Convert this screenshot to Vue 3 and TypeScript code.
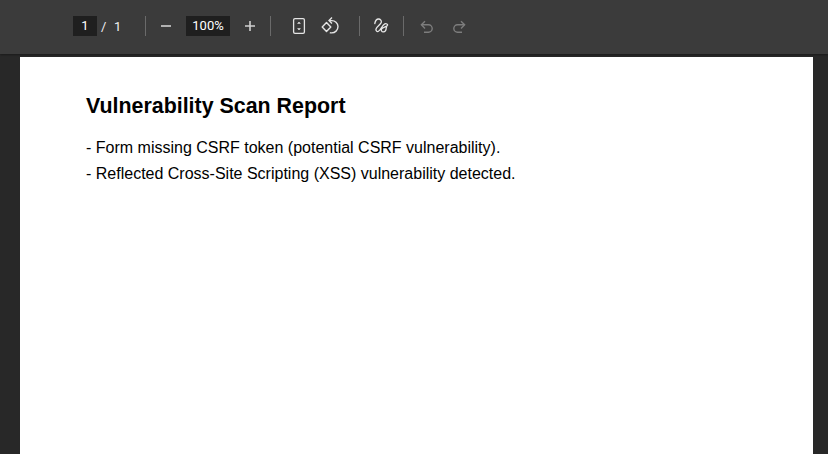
<script setup lang="ts">
const title = 'Vulnerability Scan Report'
const findings: string[] = [
  '- Form missing CSRF token (potential CSRF vulnerability).',
  '- Reflected Cross-Site Scripting (XSS) vulnerability detected.',
]
</script>

<template>
  <div class="viewer">
    <header class="toolbar">
      <span class="field page-field">1</span>
      <span class="slash">/</span>
      <span class="total">1</span>
      <i class="sep sep-a"></i>
      <button class="btn minus">
        <svg width="20" height="20" viewBox="0 0 20 20"><path d="M5 10h10" stroke="#d0d0d0" stroke-width="1.6" fill="none"/></svg>
      </button>
      <span class="field zoom-field">100%</span>
      <button class="btn plus">
        <svg width="20" height="20" viewBox="0 0 20 20"><path d="M5 10h10M10 5v10" stroke="#d0d0d0" stroke-width="1.6" fill="none"/></svg>
      </button>
      <i class="sep sep-b"></i>
      <button class="btn fit">
        <svg width="20" height="20" viewBox="0 0 20 20" fill="none"><rect x="4.6" y="2.600" width="10.800" height="14.800" rx="1.400" stroke="#e4e4e4" stroke-width="1.300"/><path d="M8.600 7.400 10 6l1.400 1.400zM8.600 12.600 10 14l1.400-1.400z" fill="#e4e4e4" stroke="#e4e4e4" stroke-width=".6"/></svg>
      </button>
      <button class="btn rotate">
        <svg width="20" height="20" viewBox="0 0 20 20" fill="none" stroke="#e4e4e4" stroke-width="1.400"><path d="M5.500 6.500 1.200 11l4.300 4.500L9.800 11z" stroke-linejoin="round"/><path d="M8.500 4.600h2a6.200 6.200 0 0 1 6.500 6 6.300 6.300 0 0 1-6.500 6.300c-.6 0-1.200-.1-1.700-.3"/><path d="M11 1.600 8 4.600l3 3"/></svg>
      </button>
      <i class="sep sep-c"></i>
      <button class="btn draw">
        <svg width="20" height="20" viewBox="0 0 20 20" fill="none" stroke="#e8e8e8" stroke-width="1.300" stroke-linecap="round" stroke-linejoin="round"><path d="M3.800 7.500C4.300 5 5.800 3 7.500 3c1.900 0 3.200 1.700 2.800 3.400-.4 1.700-3.800 3.900-5 5.900-.9 1.500-.1 3.400 1.500 3.300 2.600-.2 4-6.500 7-7.700 1.600-.6 3 .4 2.800 1.300-.3 1.400-4.900 1.900-6 3.800-.8 1.400.2 3 1.700 2.900 1.700-.1 2.900-2 3-4.400l.4-.8"/></svg>
      </button>
      <i class="sep sep-d"></i>
      <button class="btn undo">
        <svg width="20" height="20" viewBox="0 0 20 20" fill="none" stroke="#7d7d7d" stroke-width="1.400"><path d="M8 5.200 4.400 8.800 8 12.400"/><path d="M4.600 8.800h6.900a3.700 3.700 0 0 1 0 7.400H7"/></svg>
      </button>
      <button class="btn redo">
        <svg width="20" height="20" viewBox="0 0 20 20" fill="none" stroke="#7d7d7d" stroke-width="1.400"><path d="m12 5.200 3.600 3.600-3.600 3.600"/><path d="M15.400 8.800H8.500a3.700 3.700 0 0 0 0 7.400H13"/></svg>
      </button>
    </header>
    <main class="stage">
      <article class="page">
        <h1>{{ title }}</h1>
        <p v-for="line in findings" :key="line">{{ line }}</p>
      </article>
    </main>
  </div>
</template>

<style>
html, body { margin: 0; overflow: hidden; }
</style>

<style scoped>
.viewer {
  width: 828px;
  height: 454px;
  display: flex;
  flex-direction: column;
  background: #282828;
  overflow: hidden;
}
.toolbar {
  flex: 0 0 54px;
  height: 54px;
  box-sizing: border-box;
  padding: 0 0 2px 73px;
  display: flex;
  align-items: center;
  background: #3b3b3b;
  box-shadow: 0 1px 2px rgba(0, 0, 0, .35);
  font-family: "Roboto", "Liberation Sans", sans-serif;
  font-size: 13px;
  color: #f1f1f1;
  position: relative;
  z-index: 1;
}
.field {
  height: 20px;
  line-height: 20px;
  background: #1f1f1f;
  text-align: center;
  color: #fff;
}
.page-field { width: 24px; }
.slash { margin-left: 4px; width: 6px; }
.total { margin-left: 7px; width: 8px; }
.sep {
  width: 1px;
  height: 20px;
  background: #6a6a6a;
  flex: none;
}
.sep-a { margin-left: 23px; }
.btn {
  width: 20px;
  height: 20px;
  padding: 0;
  border: 0;
  background: none;
  display: block;
  flex: none;
}
.btn svg { display: block; }
.minus { margin-left: 10px; }
.zoom-field { width: 44px; margin-left: 10px; }
.plus { margin-left: 10px; }
.sep-b { margin-left: 10px; }
.fit { margin-left: 18px; }
.rotate { margin-left: 12px; }
.sep-c { margin-left: 18px; }
.draw { margin-left: 11px; }
.sep-d { margin-left: 12px; }
.undo { margin-left: 13px; }
.redo { margin-left: 12px; }
.stage {
  flex: 1;
  min-height: 0;
  padding: 3px 15px 0 20px;
}
.page {
  height: 100%;
  box-sizing: border-box;
  background: #fff;
  padding: 36px 0 0 66px;
  font-family: "Liberation Sans", Arial, sans-serif;
  color: #000;
}
h1 {
  margin: 0 0 16px;
  font-size: 21.400px;
  line-height: 26px;
  font-weight: 700;
}
p {
  margin: 0;
  font-size: 16px;
  line-height: 26px;
}
</style>
